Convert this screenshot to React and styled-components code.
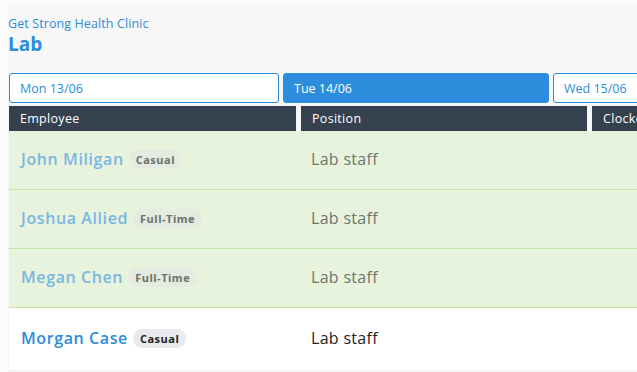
import React from "react";
import styled, { createGlobalStyle } from "styled-components";

const GlobalStyle = createGlobalStyle`
  html, body {
    margin: 0;
    padding: 0;
    background: #fbfbfb;
    font-family: "Open Sans", "Liberation Sans", sans-serif;
    overflow: hidden;
  }
`;

const days = [
  { label: "Mon 13/06", active: false },
  { label: "Tue 14/06", active: true },
  { label: "Wed 15/06", active: false },
];

const shifts = [
  { name: "John Miligan", type: "Casual", position: "Lab staff", done: true },
  { name: "Joshua Allied", type: "Full-Time", position: "Lab staff", done: true },
  { name: "Megan Chen", type: "Full-Time", position: "Lab staff", done: true },
  { name: "Morgan Case", type: "Casual", position: "Lab staff", done: false },
];

const App = () => {
  return (
    <>
      <GlobalStyle />
      <Page>
        <Heading>
          <Clinic>Get Strong Health Clinic</Clinic>
          <Title>Lab</Title>
        </Heading>

        <DayTabs>
          {days.map((day) => (
            <DayTab key={day.label} $active={day.active}>
              {day.label}
            </DayTab>
          ))}
        </DayTabs>

        <TableHead>
          <HeadCell>Employee</HeadCell>
          <HeadCell>Position</HeadCell>
          <HeadCell>Clocked in</HeadCell>
        </TableHead>

        {shifts.map((shift, i) => (
          <Row key={shift.name} $done={shift.done} $last={i === shifts.length - 1}>
            <NameCell>
              <Name $done={shift.done}>{shift.name}</Name>
              <Badge $done={shift.done}>{shift.type}</Badge>
            </NameCell>
            <PositionCell $done={shift.done}>{shift.position}</PositionCell>
            <div />
          </Row>
        ))}
      </Page>
    </>
  );
};

export default App;

const Page = styled.div`
  margin: 2px 0 0 8px;
  width: 900px;
  height: 370px;
  background: #f7f7f7;
  overflow: hidden;
`;

const Heading = styled.div`
  padding: 13px 0 0 0;
  height: 58px;
  box-sizing: border-box;
`;

const Clinic = styled.div`
  font-size: 12.5px;
  line-height: 17px;
  letter-spacing: 0.1px;
  color: #2b8ddb;
`;

const Title = styled.div`
  font-size: 19px;
  line-height: 24px;
  font-weight: 700;
  color: #2b8ddb;
`;

const DayTabs = styled.div`
  display: grid;
  grid-template-columns: 270px 266px 270px;
  gap: 4px;
  padding: 13px 0 0 1px;
`;

const DayTab = styled.div`
  height: 30px;
  box-sizing: border-box;
  border: 1px solid #2b8ddb;
  border-radius: 3px;
  background: ${(p) => (p.$active ? "#2b8ddb" : "#ffffff")};
  color: ${(p) => (p.$active ? "#ffffff" : "#2b8ddb")};
  font-size: 12.5px;
  display: flex;
  align-items: center;
  padding-left: 10px;
`;

const TableHead = styled.div`
  display: grid;
  grid-template-columns: 287px 286px 1fr;
  gap: 5px;
  margin: 3px 0 0 1px;
`;

const HeadCell = styled.div`
  height: 25px;
  background: #35414e;
  color: #ffffff;
  font-size: 12.5px;
  letter-spacing: 0.3px;
  display: flex;
  align-items: center;
  padding-left: 11px;
`;

const Row = styled.div`
  display: grid;
  grid-template-columns: 291px 291px 1fr;
  height: ${(p) => (p.$last ? "63px" : "59px")};
  box-sizing: border-box;
  margin-left: 1px;
  padding-bottom: 2px;
  background: ${(p) => (p.$done ? "#e8f3de" : "#ffffff")};
  border-bottom: 1px solid ${(p) => (p.$done ? "#c3e6a3" : "#ededed")};
  align-items: center;
`;

const NameCell = styled.div`
  display: flex;
  align-items: center;
  gap: 5px;
  padding-left: 12px;
`;

const Name = styled.span`
  font-size: 16px;
  font-weight: 600;
  letter-spacing: 0.6px;
  color: ${(p) => (p.$done ? "#7ab6e2" : "#2b8ddb")};
`;

const Badge = styled.span`
  font-size: 11px;
  font-weight: 700;
  letter-spacing: 0.5px;
  padding: 2px 7px;
  border-radius: 9px;
  background: ${(p) => (p.$done ? "#e4ebe0" : "#e8eaed")};
  color: ${(p) => (p.$done ? "#6c716a" : "#222222")};
`;

const PositionCell = styled.div`
  font-size: 16px;
  letter-spacing: 0.3px;
  padding-left: 11px;
  color: ${(p) => (p.$done ? "#6d756b" : "#1e1e1e")};
`;
